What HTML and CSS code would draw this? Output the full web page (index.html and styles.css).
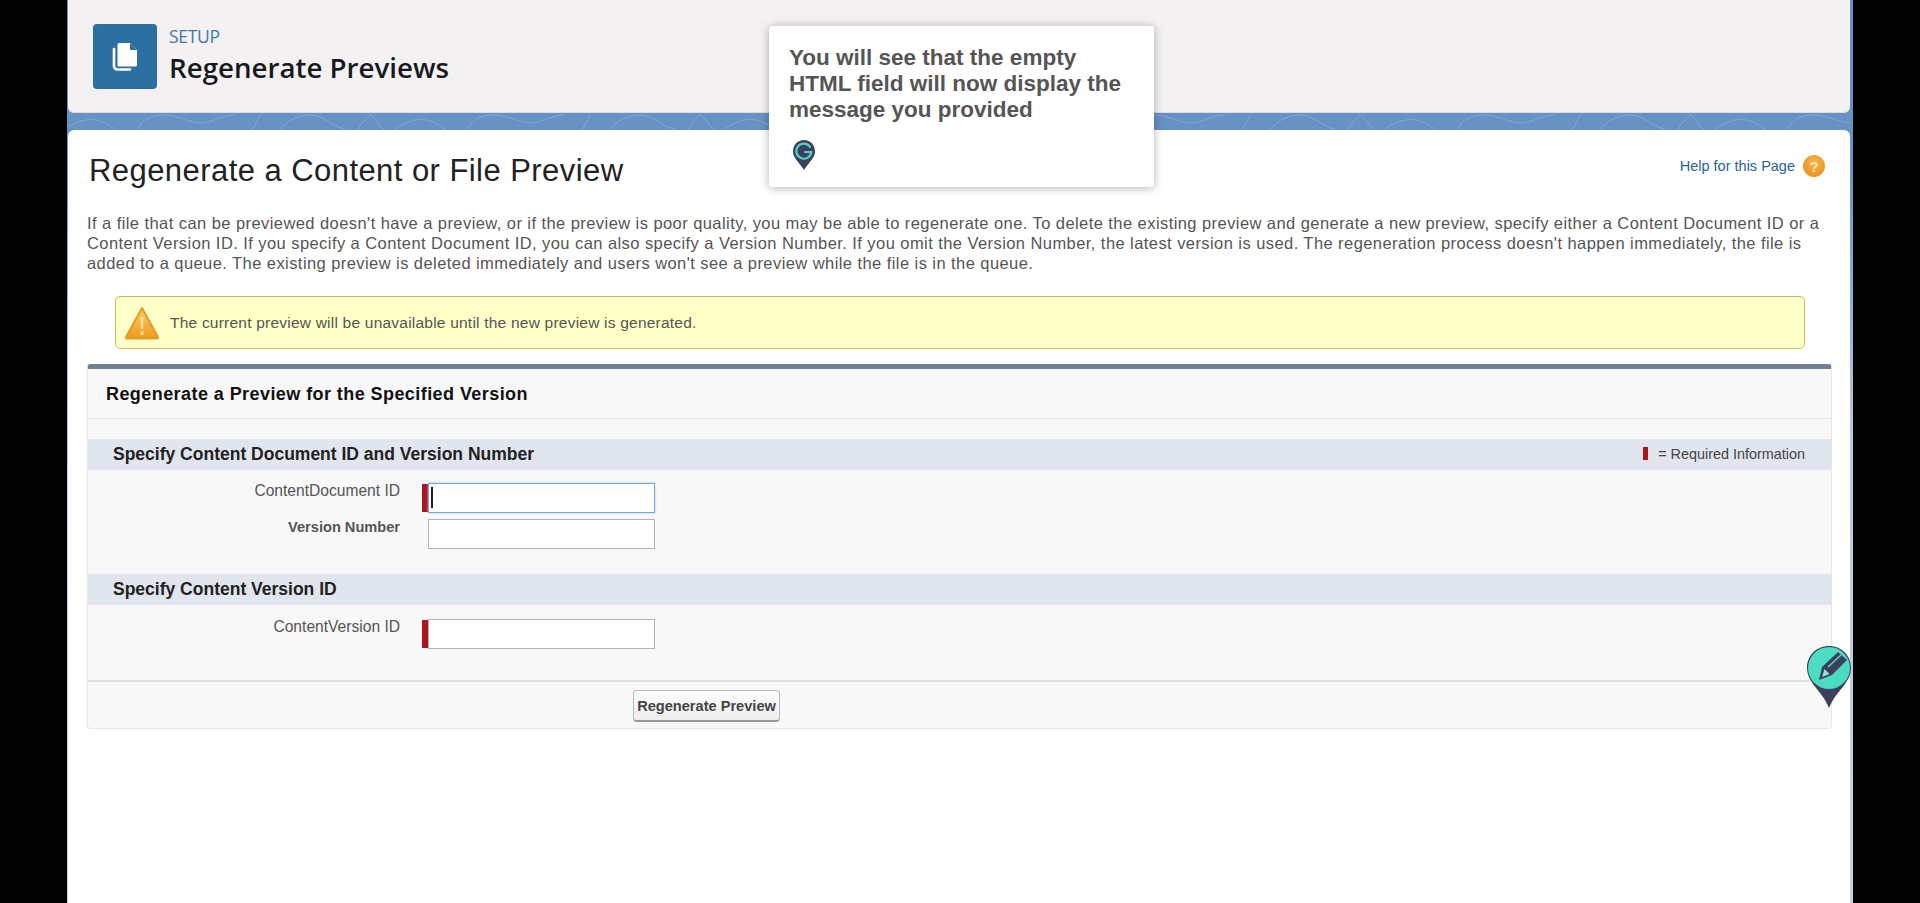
FILE: index.html
```html
<!DOCTYPE html>
<html lang="en">
<head>
<meta charset="utf-8">
<title>Regenerate Previews</title>
<link rel="stylesheet" href="styles.css">
</head>
<body>
<div class="app">
  <header class="page-header">
    <div class="header-icon">
      <svg width="26" height="29" viewBox="0 0 26 29"><path fill="#fff" d="M7 1h11l7 7v15a1.500 1.500 0 0 1-1.500 1.500H7A1.500 1.500 0 0 1 5.500 23V2.500A1.500 1.500 0 0 1 7 1z"/><path fill="#2b70a0" d="M18 1v6a1 1 0 0 0 1 1h6z"/><path fill="none" stroke="#fff" stroke-width="2.600" stroke-linecap="round" d="M2 7v17a3.500 3.500 0 0 0 3.500 3.500H18"/></svg>
    </div>
    <div>
      <div class="eyebrow">SETUP</div>
      <h1 class="page-title">Regenerate Previews</h1>
    </div>
  </header>
  <div class="band">
    <svg class="band-art" width="1786" height="18">
      <defs><pattern id="swirl" width="330" height="18" patternUnits="userSpaceOnUse"><path fill="none" stroke="#86a8d1" stroke-width="1" d="M0 16C20 2 36 4 52 18M72 16c8-12 16-14 28-14s26 8 36 8 20-8 34-8M186 18c6-8 8-14 10-16M214 18c4-6 14-16 32-16 12 0 22 12 34 14M292 18c6-10 10-14 14-16 4 4 8 10 14 16"/></pattern></defs>
      <rect width="1786" height="18" fill="url(#swirl)"/>
    </svg>
  </div>
  <main class="content">
    <div class="title-row">
      <h2 class="content-title">Regenerate a Content or File Preview</h2>
      <a class="help-link">Help for this Page <span class="help-icon">?</span></a>
    </div>
    <p class="intro">If a file that can be previewed doesn't have a preview, or if the preview is poor quality, you may be able to regenerate one. To delete the existing preview and generate a new preview, specify either a Content Document ID or a<br>Content Version ID. If you specify a Content Document ID, you can also specify a Version Number. If you omit the Version Number, the latest version is used. The regeneration process doesn't happen immediately, the file is<br>added to a queue. The existing preview is deleted immediately and users won't see a preview while the file is in the queue.</p>
    <div class="alert">
      <svg width="36" height="34" viewBox="0 0 36 34"><defs><linearGradient id="warn" x1="0" y1="0" x2="0" y2="1"><stop offset="0" stop-color="#fbd06a"/><stop offset="1" stop-color="#ef9a1c"/></linearGradient></defs><path fill="url(#warn)" stroke="#e79a28" stroke-linejoin="round" stroke-width="2" d="M18 2 34 31a1 1 0 0 1-1 1.500H3A1 1 0 0 1 2 31z"/><path fill="#f9e3a6" d="M16.500 11h3l-.7 12h-1.600zM16.500 25.500h3v3.500h-3z"/></svg>
      <span>The current preview will be unavailable until the new preview is generated.</span>
    </div>
    <section class="panel">
      <h3 class="panel-title">Regenerate a Preview for the Specified Version</h3>
      <div class="section-bar">
        <h4 class="section-title">Specify Content Document ID and Version Number</h4>
        <div class="legend"><i class="legend-mark"></i><span>= Required Information</span></div>
      </div>
      <div class="form-grid first">
        <label class="field-label">ContentDocument ID</label>
        <i class="req-mark"></i>
        <div class="field"><input class="text-input focused" type="text"><i class="caret"></i></div>
        <label class="field-label strong">Version Number</label>
        <span></span>
        <div class="field"><input class="text-input" type="text"></div>
      </div>
      <div class="section-bar">
        <h4 class="section-title">Specify Content Version ID</h4>
      </div>
      <div class="form-grid second">
        <label class="field-label">ContentVersion ID</label>
        <i class="req-mark"></i>
        <div class="field"><input class="text-input" type="text"></div>
      </div>
      <div class="panel-footer"><button class="btn" type="button">Regenerate Preview</button></div>
    </section>
  </main>

  <aside class="tip">
    <p class="tip-text">You will see that the empty HTML field will now display the message you provided</p>
    <svg class="tip-pin" width="24" height="32" viewBox="0 0 24 32"><path fill="#3e3f5e" d="M12 1C5.500 1 1 6 1 12.500c0 6 5 9.500 11 18.500 6-9 11-12.500 11-18.500C23 6 18.500 1 12 1z"/><path fill="none" stroke="#4bd6bd" stroke-width="2.200" stroke-linecap="round" d="M18 7.800A7.500 7.500 0 1 0 19.300 13H13"/></svg>
  </aside>
  <svg class="edit-pin" width="46" height="64" viewBox="0 0 46 64"><path fill="#3e3f5e" d="M23 1C10 1 1 11 1 23c0 6 2 10 6 16 6 8 12 14 16 24 4-10 10-16 16-24 4-6 6-10 6-16C45 11 36 1 23 1z"/><circle cx="23" cy="23" r="21" fill="#4bdcc3"/><path fill="#3e3f5e" d="M13 35 16 22 32 7l9 8-15 15z"/><path fill="#8fe6d6" d="M16 32l2.500-8 5 5z"/><path stroke="#4bdcc3" stroke-width="1.500" d="M22 22 35 10"/></svg>
</div>
</body>
</html>
```
FILE: styles.css
```css
* { box-sizing: border-box; }
html, body { margin: 0; height: 100%; overflow: hidden; background: #000; }
body { font-family: "Liberation Sans", Arial, sans-serif; color: #444; }
.app {
  position: relative;
  width: 1786px;
  height: 903px;
  margin-left: 67px;
  padding: 0 3px 0 1px;
  background: linear-gradient(#6692c4 0, #6692c4 160px, #b4c6df 420px, #c4d2e6 100%);
}
.page-header {
  display: flex;
  align-items: center;
  gap: 12px;
  height: 113px;
  padding: 0 0 2px 25px;
  background: #f3f1f1;
  border-bottom: 1px solid #d8dde6;
  border-radius: 0 0 6px 6px;
}
.header-icon {
  display: flex;
  align-items: center;
  justify-content: center;
  width: 64px;
  height: 65px;
  margin-top: 2px;
  background: #2b70a0;
  border-radius: 4px;
}
.eyebrow {
  font-family: "Open Sans", sans-serif;
  font-size: 17.500px;
  line-height: 20px;
  letter-spacing: -.3px;
  color: #3f78a8;
}
.page-title {
  margin: 4px 0 0;
  font-family: "Open Sans", sans-serif;
  font-size: 27.700px;
  line-height: 34px;
  font-weight: 600;
  color: #16191f;
}
.band { position: relative; height: 17px; overflow: hidden; }
.band-art { position: absolute; left: -3px; top: 0; }
.content {
  height: 773px;
  padding: 22px 18px 0 19px;
  background: #fff;
  border-radius: 6px 6px 0 0;
}
.title-row { display: flex; justify-content: space-between; align-items: flex-start; height: 61px; }
.content-title {
  margin: 1px 0 0 2px;
  font-size: 31px;
  line-height: 36px;
  font-weight: 400;
  letter-spacing: .44px;
  color: #222;
}
.help-link {
  display: flex;
  align-items: center;
  gap: 8px;
  margin: 4px 7px 0 0;
  height: 20px;
  font-size: 14.500px;
  color: #2a6496;
}
.help-icon {
  display: flex;
  align-items: center;
  justify-content: center;
  width: 22px;
  height: 22px;
  border-radius: 50%;
  background: radial-gradient(circle at 50% 35%, #f6b44f, #e28c14);
  color: #fbe6b8;
  font-size: 15px;
  font-weight: 700;
}
.intro {
  margin: 0;
  font-size: 16.500px;
  letter-spacing: .43px;
  line-height: 20px;
  white-space: nowrap;
  color: #555;
}
.alert {
  display: flex;
  align-items: center;
  gap: 10px;
  height: 53px;
  margin: 23px 27px 15px 28px;
  padding: 0 0 0 8px;
  background: #ffffc8;
  border: 1.500px solid #d9b95e;
  border-radius: 5px;
  font-size: 15.500px;
  letter-spacing: .22px;
  color: #555;
}
.panel {
  height: 365px;
  background: #f8f8f8;
  border: 1px solid #e8e8e8;
  border-top: 5px solid #727f92;
  border-radius: 4px;
}
.panel-title {
  height: 50px;
  margin: 0 0 20px;
  padding: 0 0 0 18px;
  font-size: 18px;
  letter-spacing: .43px;
  line-height: 50px;
  font-weight: 700;
  color: #111;
  border-bottom: 1px solid #e2e2e2;
}
.section-bar {
  display: flex;
  justify-content: space-between;
  align-items: center;
  height: 31px;
  padding: 0 26px 0 25px;
  background: #e1e5ee;
}
.section-title { margin: 0; font-size: 17.500px; font-weight: 700; color: #222; }
.legend { display: flex; align-items: center; gap: 10px; margin-top: -2px; font-size: 14.400px; color: #444; }
.legend-mark { display: block; width: 5px; height: 13px; background: #b0141e; }
.form-grid {
  display: grid;
  grid-template-columns: 312px 28px 227px;
  grid-auto-rows: 30px;
  row-gap: 6px;
}
.form-grid.first { height: 104px; padding-top: 13px; }
.form-grid.second { height: 75px; padding-top: 14px; }
.field-label { text-align: right; font-size: 15.600px; line-height: 16px; color: #555; }
.field-label.strong { font-weight: 700; font-size: 14.600px; }
.req-mark { display: block; justify-self: end; width: 6px; height: 28px; margin-top: 1px; background: #ab1420; }
.field { position: relative; height: 30px; }
.text-input {
  display: block;
  width: 100%;
  height: 30px;
  border: 1px solid #b2b2b2;
  background: #fff;
  outline: none;
}
.text-input.focused { border: 1.500px solid #7aa7da; box-shadow: 0 0 2px #9cc0e8; }
.caret { position: absolute; left: 3px; top: 4px; width: 1.500px; height: 21px; background: #1c1c30; }
.panel-footer {
  height: 49px;
  padding: 8px 0 0 545px;
  border-top: 2px solid #e2e2e2;
}
.btn {
  display: block;
  width: 147px;
  height: 32px;
  padding: 0;
  font-family: "Liberation Sans", Arial, sans-serif;
  font-size: 14.600px;
  font-weight: 700;
  color: #444;
  background: linear-gradient(#fdfdfd, #ececec);
  border: 1px solid #b9b9b9;
  border-bottom: 2px solid #9a9a9a;
  border-radius: 4px;
}
.tip {
  position: absolute;
  left: 702px;
  top: 26px;
  width: 385px;
  height: 161px;
  padding: 19px 20px 0;
  background: #fff;
  border-radius: 3px;
  box-shadow: 0 1px 10px rgba(0, 0, 0, .3);
}
.tip-text { margin: 0; width: 345px; font-size: 22.500px; line-height: 26px; font-weight: 700; color: #555; }
.tip-pin { display: block; margin: 16px 0 0 3px; }
.edit-pin { position: absolute; left: 1739px; top: 645px; }
```
